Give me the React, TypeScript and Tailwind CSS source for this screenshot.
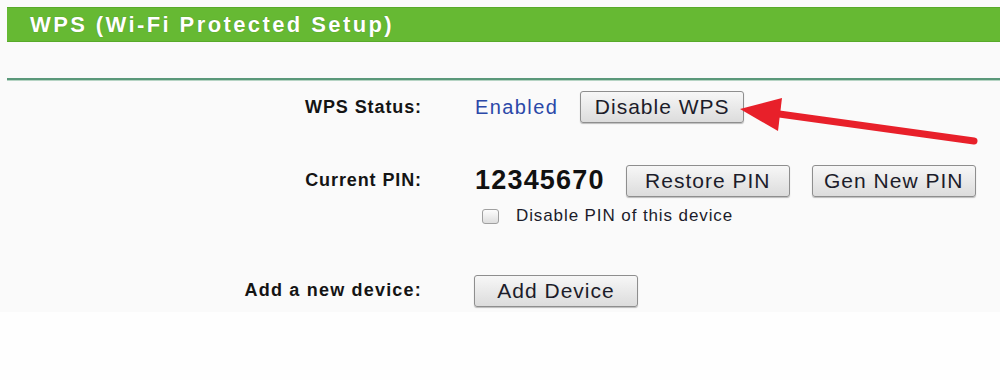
import React from "react";

const btn =
  "flex h-[32px] w-[164px] items-center justify-center rounded-[3px] border border-[#8e8e8e] bg-gradient-to-b from-[#f7f7f7] to-[#dcdcdc] text-[21px] tracking-[1px] text-[#1c1c2a] shadow-[0_1px_1px_rgba(0,0,0,0.25)]";

const label = "w-[422px] text-right text-[18px] font-bold tracking-[0.9px] text-[#141414]";

function Arrow() {
  return (
    <svg className="pointer-events-none absolute left-0 top-0" width="1000" height="380">
      <line x1="772" y1="113" x2="974" y2="141" stroke="#e8202a" strokeWidth="7" strokeLinecap="round" />
      <polygon points="740,109 782,98 778,131" fill="#e8202a" />
    </svg>
  );
}

export default function App() {
  return (
    <div className="relative h-[380px] w-[1000px] overflow-hidden bg-[#fefefe] font-['Liberation_Sans',Arial,sans-serif]">
      <div className="h-[312px] bg-[#fafafa] pl-[7px] pt-[7px]">
        <div className="flex h-[35px] items-center border-y border-[#58aa2a] bg-[#66b933] pl-[23px]">
          <span className="text-[22px] font-bold tracking-[2.4px] text-white [text-shadow:0_0_1px_rgba(0,0,0,0.3)]">
            WPS (Wi-Fi Protected Setup)
          </span>
        </div>
        <div className="mt-[36px] h-[2px] bg-[#5a987a]" />
        <div className="h-[1px] bg-[#b6d4c4]" />

        <div className="-ml-[7px]">
          <div className="mt-[10px] flex h-[32px] items-center">
            <div className={label}>WPS Status:</div>
            <div className="ml-[53px] text-[20px] tracking-[1.4px] text-[#2b48a8]">Enabled</div>
            <button className={`${btn} ml-[22px]`}>Disable WPS</button>
          </div>

          <div className="mt-[42px] flex h-[31px] items-center">
            <div className={label}>Current PIN:</div>
            <div className="ml-[53px] text-[27px] font-bold tracking-[1.2px] text-[#111]">12345670</div>
            <button className={`${btn} ml-[21px] h-[31px]`}>Restore PIN</button>
            <button className={`${btn} ml-[22px] h-[31px]`}>Gen New PIN</button>
          </div>

          <div className="mt-[12px] flex h-[16px] items-center pl-[482px]">
            <span className="h-[15px] w-[17px] rounded-[3px] border border-[#a0a0a0] bg-gradient-to-b from-[#fdfdfd] to-[#dedede]" />
            <span className="ml-[17px] text-[17px] tracking-[0.9px] text-[#1c1c2a]">Disable PIN of this device</span>
          </div>

          <div className="mt-[51px] flex h-[31px] items-center">
            <div className={`${label} tracking-[1.2px]`}>Add a new device:</div>
            <button className={`${btn} ml-[52px] h-[31px]`}>Add Device</button>
          </div>
        </div>
      </div>
      <Arrow />
    </div>
  );
}
